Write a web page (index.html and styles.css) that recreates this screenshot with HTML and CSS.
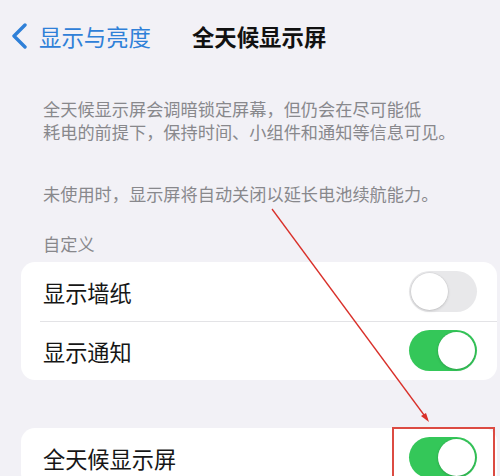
FILE: index.html
```html
<!DOCTYPE html>
<html lang="zh-CN">
<head>
<meta charset="utf-8">
<link rel="stylesheet" href="styles.css">
</head>
<body>
<div class="page">
  <header class="nav">
    <a class="back">
      <svg class="chev" width="18" height="26" viewBox="0 0 18 26"><polyline points="14,2 3,13 14,24" fill="none" stroke="#2f80d8" stroke-width="3.4" stroke-linecap="round" stroke-linejoin="round"/></svg>
      <span class="back-text">显示与亮度</span>
    </a>
    <h1 class="title">全天候显示屏</h1>
  </header>

  <section class="desc">
    <p class="para">全天候显示屏会调暗锁定屏幕，但仍会在尽可能低<br>耗电的前提下，保持时间、小组件和通知等信息可见。</p>
    <p class="para para2">未使用时，显示屏将自动关闭以延长电池续航能力。</p>
    <p class="section-label">自定义</p>
  </section>

  <div class="card">
    <div class="row">
      <span class="row-label">显示墙纸</span>
      <span class="toggle off"><span class="knob"></span></span>
    </div>
    <div class="row row-divided">
      <span class="row-label">显示通知</span>
      <span class="toggle on"><span class="knob"></span></span>
    </div>
  </div>

  <div class="card card2">
    <div class="row">
      <span class="row-label">全天候显示屏</span>
      <span class="toggle on"><span class="knob"></span></span>
    </div>
  </div>

  <div class="highlight"></div>
  <svg class="arrow" width="500" height="476" viewBox="0 0 500 476">
    <line x1="272" y1="209" x2="427" y2="419" stroke="#d9302a" stroke-width="1.3"/>
    <polygon points="429,422 421,416 426,413" fill="#d9302a"/>
  </svg>
</div>
</body>
</html>
```

FILE: styles.css
```css
html, body {
  margin: 0;
  padding: 0;
  background: #f2f1f6;
}
body {
  width: 500px;
  height: 476px;
  overflow: hidden;
  font-family: "Noto Sans CJK SC", "Noto Sans", sans-serif;
}
.page {
  position: relative;
  width: 500px;
  height: 476px;
  overflow: hidden;
}
.nav {
  height: 72px;
  display: flex;
  align-items: center;
  padding-left: 11px;
}
.back {
  display: flex;
  align-items: center;
  color: #2f80d8;
}
.chev {
  display: block;
  margin-right: 10px;
}
.back-text {
  font-size: 22.4px;
  line-height: 30px;
}
.title {
  margin: 0 0 0 41px;
  font-size: 22.4px;
  line-height: 30px;
  font-weight: 700;
  color: #111;
}
.desc {
  padding: 25px 0 0 43px;
  color: #88888c;
  font-size: 17.2px;
  line-height: 23px;
}
.para {
  margin: 0;
}
.para2 {
  margin-top: 39px;
}
.section-label {
  margin: 27px 0 0 0;
}
.card {
  margin: 7px 3px 0 21px;
  background: #ffffff;
  border-radius: 14px;
}
.card2 {
  margin-top: 48px;
}
.row {
  height: 59px;
  display: flex;
  align-items: center;
  justify-content: space-between;
  padding: 0 20px 0 22px;
  position: relative;
}
.row-divided::before {
  content: "";
  position: absolute;
  left: 19px;
  right: 0;
  top: 0;
  height: 1px;
  background: #e3e3e6;
}
.row-label {
  font-size: 22.2px;
  color: #161616;
  line-height: 30px;
}
.toggle {
  width: 68px;
  height: 41px;
  border-radius: 21px;
  display: flex;
  align-items: center;
  padding: 0 2px;
  box-sizing: border-box;
}
.toggle.off {
  background: #e8e8ea;
  justify-content: flex-start;
}
.toggle.on {
  background: #34c759;
  justify-content: flex-end;
}
.knob {
  width: 37px;
  height: 37px;
  border-radius: 50%;
  background: #ffffff;
  box-shadow: 0 1px 3px rgba(0,0,0,0.16), 0 0 0 0.5px rgba(0,0,0,0.06);
}
.highlight {
  position: absolute;
  left: 392px;
  top: 427px;
  width: 99px;
  height: 60px;
  border: 2px solid #dc4b42;
}
.arrow {
  position: absolute;
  left: 0;
  top: 0;
  pointer-events: none;
}
```
